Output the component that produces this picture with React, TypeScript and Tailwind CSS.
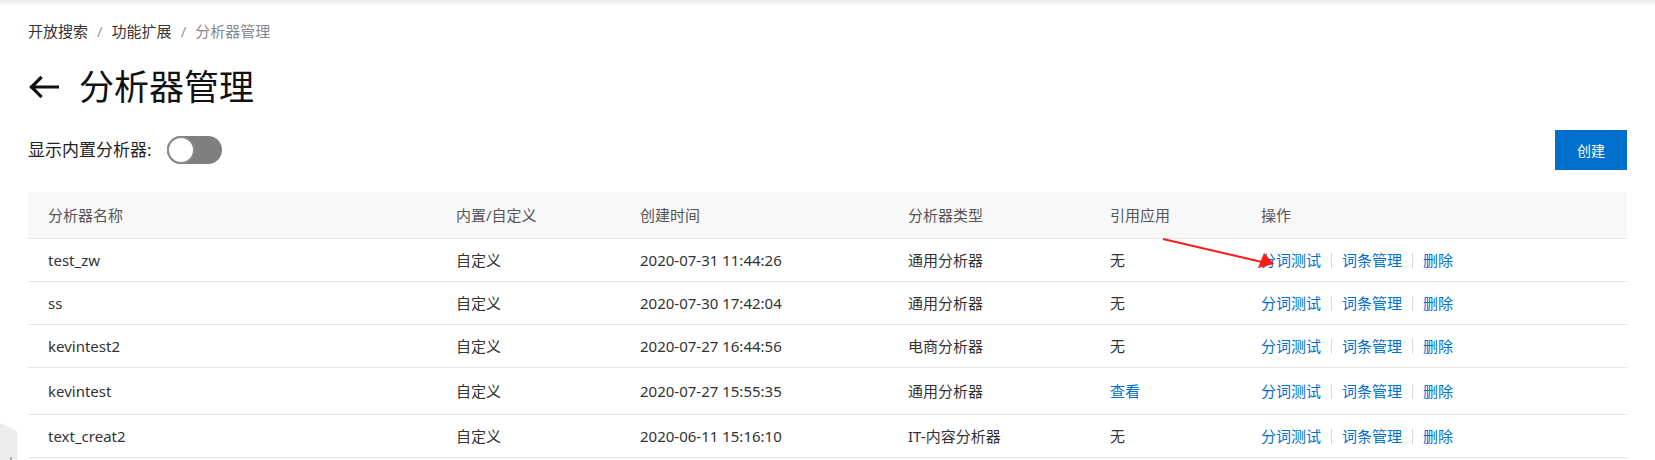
import React from "react";

const rows = [
  { name: "test_zw", kind: "自定义", time: "2020-07-31 11:44:26", type: "通用分析器", ref: "无" },
  { name: "ss", kind: "自定义", time: "2020-07-30 17:42:04", type: "通用分析器", ref: "无" },
  { name: "kevintest2", kind: "自定义", time: "2020-07-27 16:44:56", type: "电商分析器", ref: "无" },
  { name: "kevintest", kind: "自定义", time: "2020-07-27 15:55:35", type: "通用分析器", ref: "查看" },
  { name: "text_creat2", kind: "自定义", time: "2020-06-11 15:16:10", type: "IT-内容分析器", ref: "无" },
];

const cols = "grid grid-cols-[408px_184px_268px_202px_151px_1fr]";

function BackArrow() {
  return (
    <svg width="31" height="22" viewBox="0 0 31 22" fill="none">
      <path d="M30 11H3.5M12.5 2L3.5 11L12.5 20" stroke="#111" strokeWidth="3.2" strokeLinecap="square" />
    </svg>
  );
}

export default function App() {
  return (
    <div
      className="relative h-[460px] w-[1655px] overflow-hidden bg-white text-[#333]"
      style={{ fontFamily: '"Noto Sans", "Noto Sans CJK SC", sans-serif' }}
    >
      {/* top bar shadow */}
      <div className="h-[6px] bg-gradient-to-b from-[#e9e9e9] to-white" />

      <div className="px-[28px]">
        {/* breadcrumb */}
        <div className="mt-[15px] flex h-[20px] items-center text-[15px] leading-[20px]">
          <span className="text-[#333]">开放搜索</span>
          <span className="px-[9px] text-[#999]">/</span>
          <span className="text-[#333]">功能扩展</span>
          <span className="px-[9px] text-[#999]">/</span>
          <span className="text-[#888]">分析器管理</span>
        </div>

        {/* title */}
        <div className="mt-[22px] flex h-[48px] items-center gap-[20px]">
          <BackArrow />
          <h1 className="text-[35px] leading-[48px] font-normal text-[#111]">分析器管理</h1>
        </div>

        {/* toolbar */}
        <div className="mt-[19px] flex h-[40px] items-center justify-between">
          <div className="flex items-center gap-[15px]">
            <span className="text-[17px] text-[#222]">显示内置分析器:</span>
            <div className="relative h-[28px] w-[55px] rounded-full bg-[#7f7f7f]">
              <div className="absolute left-0 top-0 h-[28px] w-[28px] rounded-full border-2 border-[#8a8a8a] bg-white" />
            </div>
          </div>
          <button className="h-[40px] w-[72px] bg-[#0070cc] text-[14px] text-white">创建</button>
        </div>

        {/* table */}
        <div className="mt-[22px] text-[15px]">
          <div className={`${cols} h-[47px] items-center border-b border-[#e6e6e6] bg-[#f8f8f8] text-[#555]`}>
            <div className="pl-[20px]">分析器名称</div>
            <div className="pl-[20px]">内置/自定义</div>
            <div className="pl-[20px]">创建时间</div>
            <div className="pl-[20px]">分析器类型</div>
            <div className="pl-[20px]">引用应用</div>
            <div className="pl-[20px]">操作</div>
          </div>
          {rows.map((r) => (
            <div
              key={r.name}
              className={`${cols} ${r.ref === "查看" ? "h-[47px]" : "h-[43px]"} items-center border-b border-[#e6e6e6] text-[#333]`}
            >
              <div className="pl-[20px]">{r.name}</div>
              <div className="pl-[20px]">{r.kind}</div>
              <div className="pl-[20px]">{r.time}</div>
              <div className="pl-[20px]">{r.type}</div>
              <div className={`pl-[20px] ${r.ref === "查看" ? "text-[#0070cc]" : ""}`}>{r.ref}</div>
              <div className="flex items-center pl-[20px] text-[#0070cc]">
                <span>分词测试</span>
                <span className="mx-[10px] h-[15px] w-px bg-[#d6d6d6]" />
                <span>词条管理</span>
                <span className="mx-[10px] h-[15px] w-px bg-[#d6d6d6]" />
                <span>删除</span>
              </div>
            </div>
          ))}
        </div>
      </div>

      {/* red annotation arrow */}
      <svg className="pointer-events-none absolute left-0 top-0" width="1655" height="460">
        <line x1="1163" y1="239" x2="1262" y2="262" stroke="#ff1a1a" strokeWidth="2" />
        <polygon points="1258,268 1264,253 1274,264" fill="#ff1a1a" />
      </svg>

      {/* floating widget edge */}
      <svg className="absolute bottom-0 left-0" width="20" height="40" viewBox="0 0 20 40">
        <polygon points="0,3 17,11 17,40 0,40" fill="#ececec" />
        <rect x="10" y="37" width="2" height="3" fill="#b0b0b0" />
      </svg>
    </div>
  );
}
